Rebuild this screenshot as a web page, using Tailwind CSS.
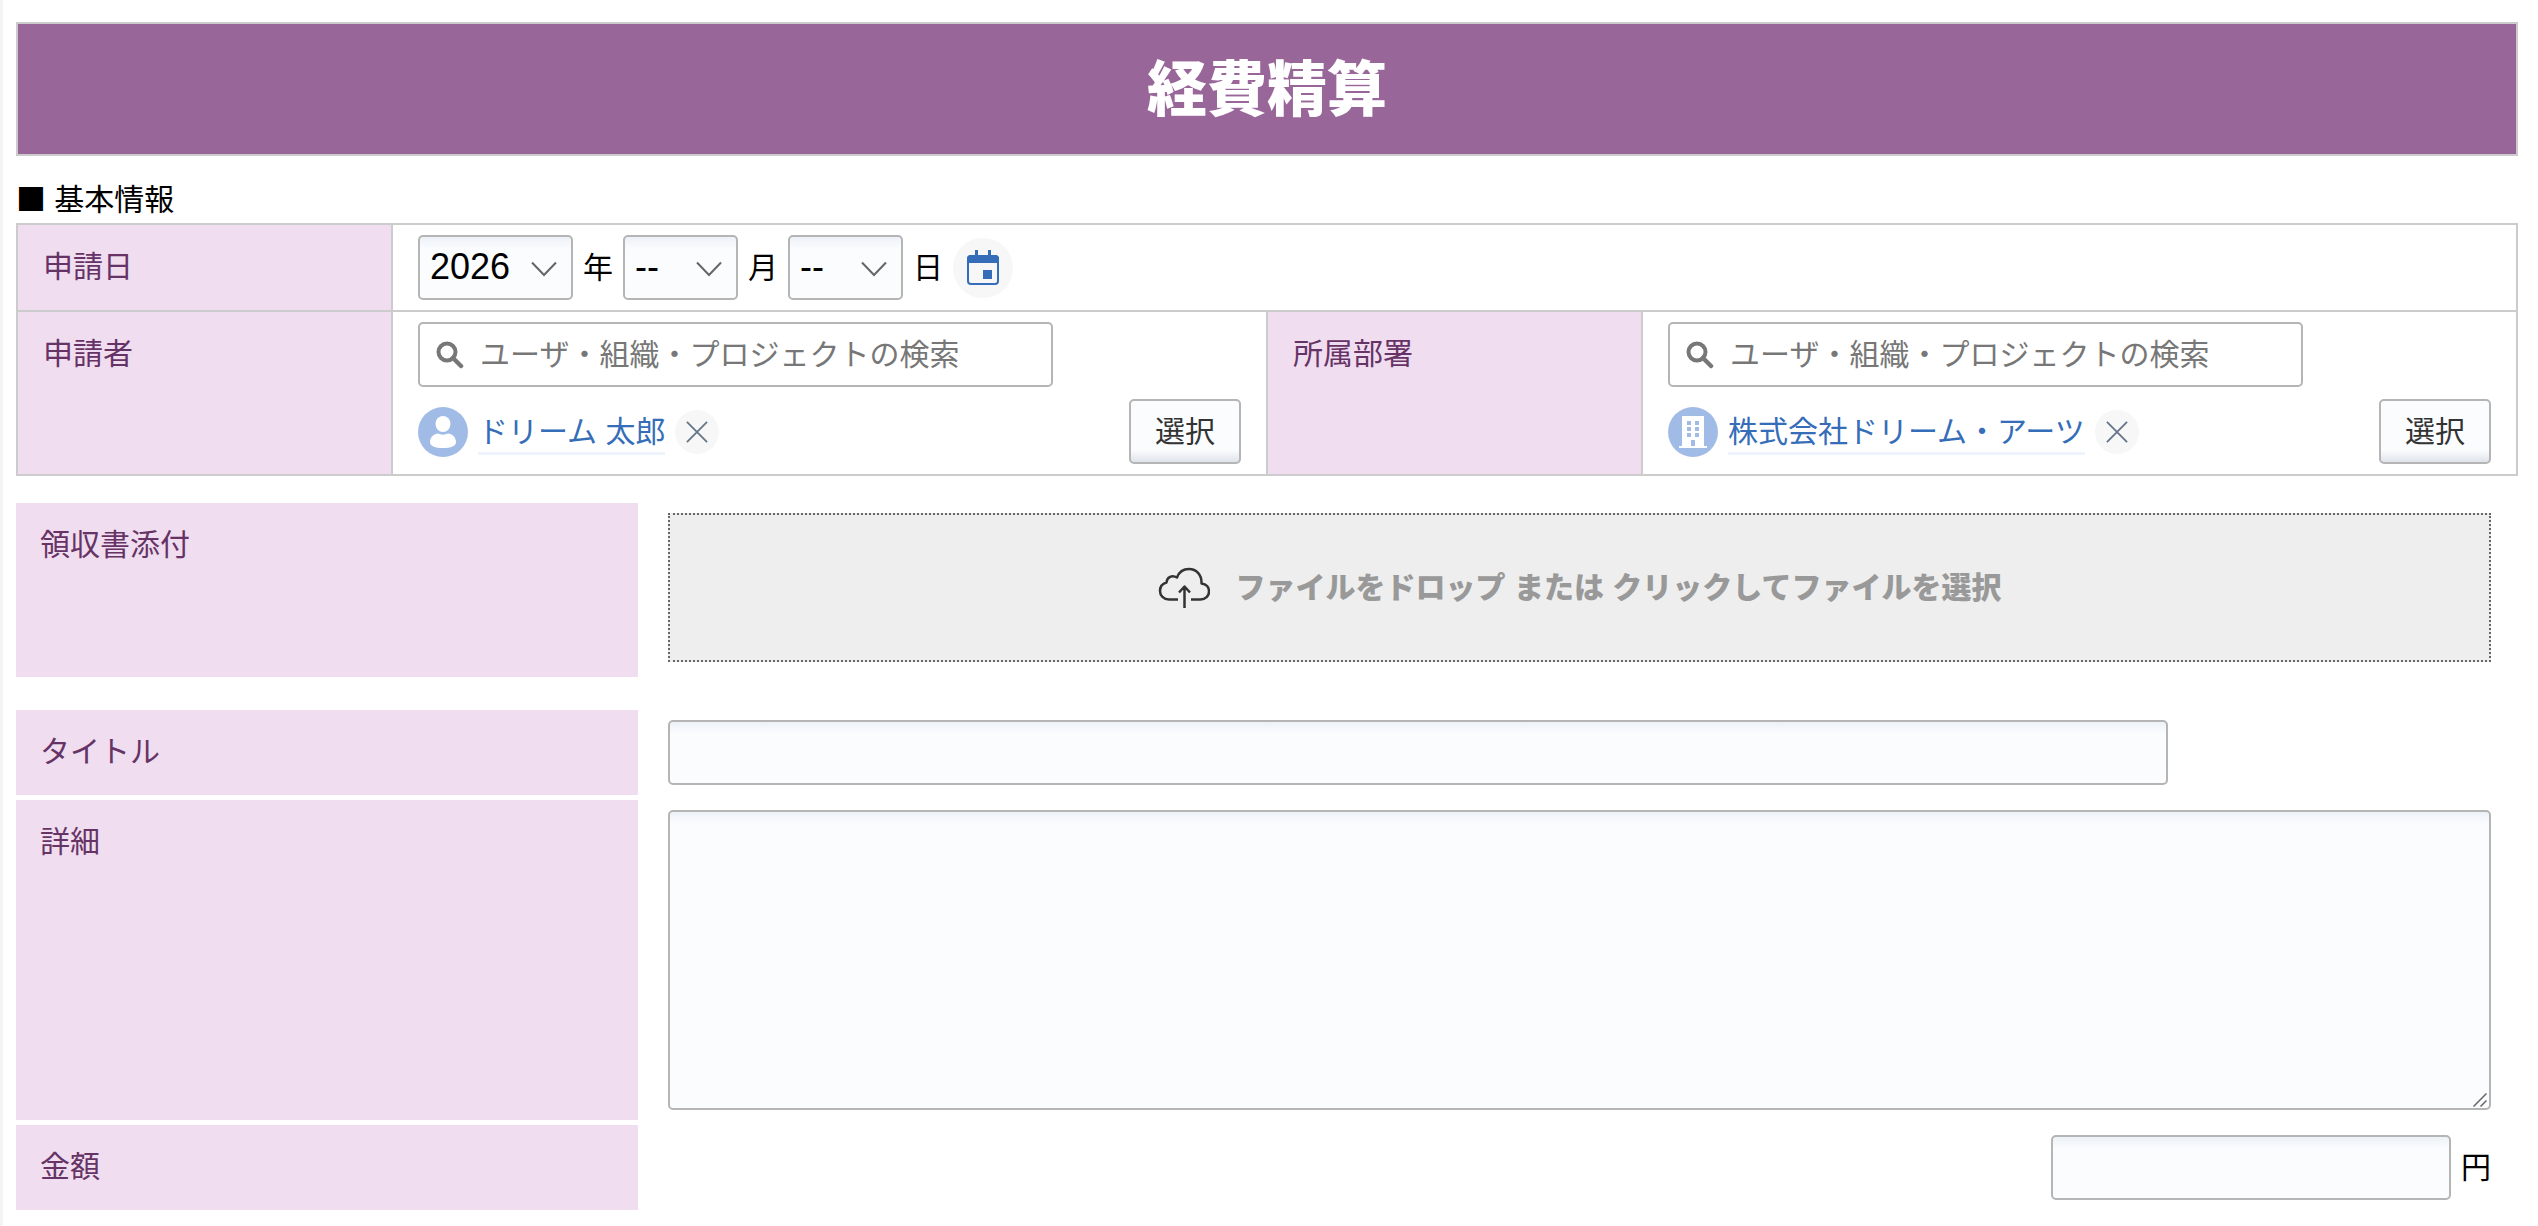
<!DOCTYPE html>
<html lang="ja">
<head>
<meta charset="utf-8">
<meta name="viewport" content="width=device-width, initial-scale=1">
<title>経費精算</title>
<script src="https://cdn.jsdelivr.net/npm/@tailwindcss/browser@4"></script>
</head>
<body class="min-h-screen border-l-3 border-[#f4f4f4] bg-white pt-[22px] pr-5 pb-3 pl-[13px] font-['Liberation_Sans','Noto_Sans_CJK_JP',sans-serif] text-[30px] leading-10 font-normal text-black">
<svg class="hidden" aria-hidden="true">
  <symbol id="chevron" viewBox="0 0 26 16"><path d="M1 1.500 13 14 25 1.500" fill="none" stroke="#666" stroke-width="2"/></symbol>
  <symbol id="search" viewBox="0 0 28 28"><circle cx="11" cy="11" r="8.500" fill="none" stroke="#777" stroke-width="4"/><path d="m17 17 8 8" stroke="#777" stroke-width="4.500" stroke-linecap="round"/></symbol>
  <symbol id="close" viewBox="0 0 24 24"><path d="m1 1 22 22M23 1 1 23" stroke="#66758a" stroke-width="2"/></symbol>
</svg>

<header class="flex h-[134px] items-center justify-center border-2 border-[#ccc] bg-[#996699] pt-1">
  <h1 class="text-[60px] leading-[80px] font-black text-white">経費精算</h1>
</header>

<main>
  <h2 class="mt-[21px] mb-[6px] h-10"><span class="font-['Noto_Sans_CJK_JP',sans-serif]">■</span> 基本情報</h2>
  <table class="w-full table-fixed border-collapse text-left [&_td]:border-2 [&_td]:border-[#ccc] [&_td]:px-[25px] [&_td]:py-[10px] [&_td]:align-top [&_th]:border-2 [&_th]:border-[#ccc] [&_th]:bg-[#f0ddef] [&_th]:px-[25px] [&_th]:py-[22px] [&_th]:align-top [&_th]:font-normal [&_th]:text-[#663366]">
    <colgroup><col class="w-[15%]"><col class="w-[35%]"><col class="w-[15%]"><col class="w-[35%]"></colgroup>
    <tbody>
      <tr>
        <th scope="row">申請日</th>
        <td colspan="3">
          <div class="flex items-center gap-[10px]">
            <div class="relative">
              <select id="year" aria-label="年" class="h-[65px] w-[155px] appearance-none rounded-[5px] border-2 border-[#b5b5b5] bg-[#fbfcfe] bg-linear-to-b from-[#edf2f8] to-[#fbfcfe] to-[12px] pb-[2px] pl-[10px] text-[36px] leading-10"><option>2026</option></select>
              <svg class="pointer-events-none absolute top-[26px] right-4 h-4 w-[26px]"><use href="#chevron"/></svg>
            </div>
            <label for="year">年</label>
            <div class="relative">
              <select id="month" aria-label="月" class="h-[65px] w-[115px] appearance-none rounded-[5px] border-2 border-[#b5b5b5] bg-[#fbfcfe] bg-linear-to-b from-[#edf2f8] to-[#fbfcfe] to-[12px] pb-[2px] pl-[10px] text-[36px] leading-10"><option>--</option></select>
              <svg class="pointer-events-none absolute top-[26px] right-4 h-4 w-[26px]"><use href="#chevron"/></svg>
            </div>
            <label for="month">月</label>
            <div class="relative">
              <select id="day" aria-label="日" class="h-[65px] w-[115px] appearance-none rounded-[5px] border-2 border-[#b5b5b5] bg-[#fbfcfe] bg-linear-to-b from-[#edf2f8] to-[#fbfcfe] to-[12px] pb-[2px] pl-[10px] text-[36px] leading-10"><option>--</option></select>
              <svg class="pointer-events-none absolute top-[26px] right-4 h-4 w-[26px]"><use href="#chevron"/></svg>
            </div>
            <label for="day">日</label>
            <button type="button" aria-label="カレンダー" class="size-[60px] rounded-full bg-[#f7f7f7]">
              <svg viewBox="0 0 60 60" class="size-[60px]"><path d="M22 12h3v6h-3zM35 12h3v6h-3z" fill="#356db9"/><rect x="15" y="18" width="30" height="28" rx="3" fill="none" stroke="#356db9" stroke-width="2"/><path d="M14 25v-4a4 4 0 0 1 4-4h24a4 4 0 0 1 4 4v4zM30 32h9v9h-9z" fill="#356db9"/></svg>
            </button>
          </div>
        </td>
      </tr>
      <tr>
        <th scope="row"><label for="applicant">申請者</label></th>
        <td>
          <div class="flex h-[65px] w-[635px] max-w-full items-center gap-4 rounded-[5px] border-2 border-[#b5b5b5] pl-4">
            <svg class="size-7 shrink-0"><use href="#search"/></svg>
            <input id="applicant" type="text" placeholder="ユーザ・組織・プロジェクトの検索" class="h-10 min-w-0 flex-1 leading-10 outline-none placeholder:text-[#777]">
          </div>
          <div class="mt-3 flex items-center">
            <svg viewBox="0 0 50 50" class="mr-[10px] size-[50px]"><circle cx="25" cy="25" r="25" fill="#a0bbe5"/><ellipse cx="25" cy="17" rx="7.500" ry="8" fill="#fff"/><path d="M12 35c0-5 4-8 8-8.500 3 1.500 7 1.500 10 0 4 .5 8 3.500 8 8.500 0 4-5 6-13 6s-13-2-13-6z" fill="#fff"/></svg>
            <a href="#" class="mt-1 border-b-3 border-[#eff3fb] text-[#356db9]">ドリーム 太郎</a>
            <button type="button" aria-label="削除" class="ml-[10px] flex size-11 items-center justify-center rounded-full bg-[#f7f7f7]"><svg class="size-[22px]"><use href="#close"/></svg></button>
            <button type="button" class="ml-auto h-[65px] w-28 rounded-[5px] border-2 border-[#b5b5b5] bg-linear-to-t from-[#dfe3eb] to-[#fbfcfe] to-[12px] text-[#333]">選択</button>
          </div>
        </td>
        <th scope="row"><label for="dept">所属部署</label></th>
        <td>
          <div class="flex h-[65px] w-[635px] max-w-full items-center gap-4 rounded-[5px] border-2 border-[#b5b5b5] pl-4">
            <svg class="size-7 shrink-0"><use href="#search"/></svg>
            <input id="dept" type="text" placeholder="ユーザ・組織・プロジェクトの検索" class="h-10 min-w-0 flex-1 leading-10 outline-none placeholder:text-[#777]">
          </div>
          <div class="mt-3 flex items-center">
            <svg viewBox="0 0 50 50" class="mr-[10px] size-[50px]"><circle cx="25" cy="25" r="25" fill="#a0bbe5"/><path d="M14 9h22v30h3v2H11v-2h3z" fill="#fff"/><path d="M19 14h4v4h-4zM27 14h4v4h-4zM19 20h4v4h-4zM27 20h4v4h-4zM19 26h4v4h-4zM27 26h4v4h-4zM23 33h4v6h-4z" fill="#a0bbe5"/></svg>
            <a href="#" class="mt-1 border-b-3 border-[#eff3fb] text-[#356db9]">株式会社ドリーム・アーツ</a>
            <button type="button" aria-label="削除" class="ml-[10px] flex size-11 items-center justify-center rounded-full bg-[#f7f7f7]"><svg class="size-[22px]"><use href="#close"/></svg></button>
            <button type="button" class="ml-auto h-[65px] w-28 rounded-[5px] border-2 border-[#b5b5b5] bg-linear-to-t from-[#dfe3eb] to-[#fbfcfe] to-[12px] text-[#333]">選択</button>
          </div>
        </td>
      </tr>
    </tbody>
  </table>

  <div class="mt-[27px] grid grid-cols-[1fr_3fr] gap-x-[14px] gap-y-[5px]">
    <label for="receipt" class="mb-7 bg-[#f0ddef] px-6 py-[22px] text-[#663366]">領収書添付</label>
    <div class="mb-7 pt-[10px] pr-[27px] pb-[15px] pl-4">
      <label class="flex h-[149px] items-center justify-center gap-[26px] border-2 border-dotted border-[#666] bg-[#eee] font-black text-[#999]">
        <svg viewBox="0 0 52 42" class="h-[42px] w-[52px]" fill="none" stroke="#333" stroke-width="2.500" stroke-linejoin="round"><path d="M20 32.500h-9C5.500 32.500 2 28.500 2 24c0-4.500 3-7.500 6.500-8.500C9 10 14 7.500 19 10.500 21 5 25.500 2 31 2c7.500 0 13 6 12.500 14.500 5 .5 7.500 4 7.500 8 0 4.500-3.500 8-8.500 8H33M26.500 41V20M21 25.500l5.500-6 5.500 6"/></svg>
        <span>ファイルをドロップ または クリックしてファイルを選択</span>
        <input id="receipt" type="file" class="sr-only">
      </label>
    </div>

    <label for="title" class="bg-[#f0ddef] px-6 py-[22px] text-[#663366]">タイトル</label>
    <div class="py-[10px] pr-[27px] pl-4">
      <input id="title" type="text" class="block h-[65px] w-[1500px] max-w-full rounded-[5px] border-2 border-[#b5b5b5] bg-linear-to-b from-[#edf2f8] to-[#fbfcfe] to-[12px] px-3">
    </div>

    <label for="detail" class="bg-[#f0ddef] px-6 py-[22px] text-[#663366]">詳細</label>
    <div class="py-[10px] pr-[27px] pl-4">
      <div class="relative">
        <textarea id="detail" class="block h-[300px] w-full resize-none rounded-[5px] border-2 border-[#b5b5b5] bg-linear-to-b from-[#edf2f8] to-[#fbfcfe] to-[12px] px-3"></textarea>
        <svg viewBox="0 0 14 14" class="pointer-events-none absolute right-1 bottom-[3px] size-[14px]"><path d="M.5 13.500l13-13M7.500 13.500l6-6" stroke="#666" stroke-width="1.500"/></svg>
      </div>
    </div>

    <label for="amount" class="bg-[#f0ddef] px-6 py-[22px] text-[#663366]">金額</label>
    <div class="flex items-center justify-end gap-[10px] py-[10px] pr-[27px] pl-4">
      <input id="amount" type="text" class="h-[65px] w-[400px] rounded-[5px] border-2 border-[#b5b5b5] bg-linear-to-b from-[#edf2f8] to-[#fbfcfe] to-[12px] px-3 text-right">
      <span>円</span>
    </div>
  </div>
</main>
</body>
</html>
